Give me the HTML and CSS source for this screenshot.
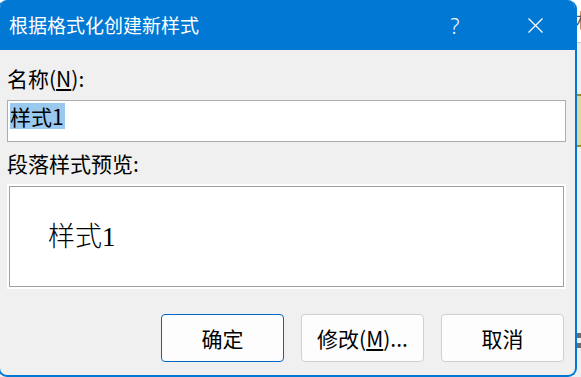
FILE: index.html
```html
<!DOCTYPE html>
<html lang="zh-CN">
<head>
<meta charset="utf-8">
<title>根据格式化创建新样式</title>
<link rel="stylesheet" href="styles.css">
</head>
<body>
<div class="desk">
  <div class="dialog">
    <div class="titlebar">
      <div class="title">根据格式化创建新样式</div>
      <div class="cap cap-help">?</div>
      <div class="cap cap-close">
        <svg width="15" height="15" viewBox="0 0 15 15"><path d="M0.5 0.5 L14.5 14.5 M14.5 0.5 L0.5 14.5" stroke="#fff" stroke-width="1.3" fill="none"/></svg>
      </div>
    </div>
    <div class="body">
      <div class="label">名称(<u>N</u>):</div>
      <div class="input"><span class="sel">样式1</span></div>
      <div class="label label2">段落样式预览:</div>
      <div class="preview"><div class="preview-inner"><span class="preview-text">样式1</span></div></div>
      <div class="buttons">
        <div class="btn btn-default">确定</div>
        <div class="btn">修改(<u>M</u>)...</div>
        <div class="btn">取消</div>
      </div>
    </div>
  </div>
  <div class="strip">
    <div class="strip-top"><span class="strip-glyph">村</span></div>
    <div class="strip-gap1"></div>
    <div class="strip-yellow"></div>
    <div class="strip-gap2"></div>
    <div class="strip-dark"></div>
    <div class="strip-gap3"></div>
    <div class="strip-dark"></div>
  </div>
</div>
</body>
</html>
```

FILE: styles.css
```css
html, body {
  margin: 0;
  padding: 0;
}
body {
  width: 581px;
  height: 377px;
  overflow: hidden;
  background: linear-gradient(#ffffff 0 42px, #c8c8c8 42px 43px, #eeeeee 43px);
  font-family: "Noto Sans CJK SC", "Noto Sans", sans-serif;
  color: #000;
}
.desk {
  display: flex;
  height: 377px;
}
.dialog {
  flex: 0 0 auto;
  width: 579px;
  height: 377px;
  margin-left: -2px;
  box-sizing: border-box;
  border: 2px solid #0078d4;
  border-top: 0;
  border-radius: 9px 9px 9px 9px;
  background: #f0f0f0;
  display: flex;
  flex-direction: column;
  overflow: hidden;
}
.titlebar {
  height: 50px;
  flex: 0 0 50px;
  background: #0078d4;
  color: #fff;
  display: flex;
  align-items: center;
}
.title {
  flex: 1;
  padding-left: 9px;
  font-size: 19px;
  line-height: 50px;
  padding-bottom: 1px;
}
.cap {
  width: 80px;
  height: 50px;
  display: flex;
  align-items: center;
  justify-content: center;
}
.cap-help {
  font-family: "Noto Sans", sans-serif;
  font-size: 21px;
  font-weight: 300;
  padding-top: 1px;
}
.cap-close svg {
  display: block;
  margin-top: 1px;
}
.body {
  flex: 1;
  padding: 13px 9px 0 7px;
  display: flex;
  flex-direction: column;
}
.label {
  font-size: 21px;
  line-height: 30px;
  height: 30px;
  white-space: nowrap;
}
.label u {
  text-underline-offset: 2px;
}
.input {
  margin-top: 7px;
  height: 42px;
  box-sizing: border-box;
  border: 1px solid #adadad;
  background: #fff;
  padding: 2px 0 0 2px;
}
.sel {
  display: inline-block;
  background: #99c9ef;
  font-size: 21px;
  line-height: 26px;
  height: 26px;
  padding-right: 1px;
}
.label2 {
  margin-top: 6px;
}
.preview {
  margin-top: 6px;
  height: 105px;
  box-sizing: border-box;
  background: #fff;
  padding: 2px;
}
.preview-inner {
  height: 100%;
  box-sizing: border-box;
  border: 1px solid #a0a0a0;
  display: flex;
  align-items: center;
  padding-left: 38px;
}
.preview-text {
  font-family: "Liberation Serif", "Noto Sans CJK SC", serif;
  font-size: 27px;
  line-height: 30px;
  font-weight: 300;
}
.buttons {
  margin-top: 25px;
  display: flex;
  justify-content: flex-end;
  gap: 17px;
  padding-right: 2px;
}
.btn {
  width: 123px;
  height: 48px;
  box-sizing: border-box;
  border: 1px solid #d0d0d0;
  border-radius: 4px;
  background: #fdfdfd;
  display: flex;
  align-items: center;
  justify-content: center;
  font-size: 21px;
  white-space: nowrap;
}
.btn u {
  text-underline-offset: 2px;
}
.btn-default {
  border-color: #0067c0;
}
.strip {
  flex: 0 0 4px;
  width: 4px;
  display: flex;
  flex-direction: column;
  overflow: hidden;
}
.strip-top {
  height: 42px;
  overflow: hidden;
  font-size: 19px;
  line-height: 40px;
  color: #555;
}
.strip-glyph {
  display: block;
  margin-left: -1px;
  white-space: nowrap;
}
.strip-gap1 {
  height: 52px;
}
.strip-yellow {
  height: 49px;
  background: #ddd9a0;
  border-top: 2px solid #a08a1e;
  border-bottom: 2px solid #a08a1e;
}
.strip-gap2 {
  height: 186px;
}
.strip-dark {
  height: 5px;
  background: #6b6b6b;
}
.strip-gap3 {
  height: 5px;
}
```
